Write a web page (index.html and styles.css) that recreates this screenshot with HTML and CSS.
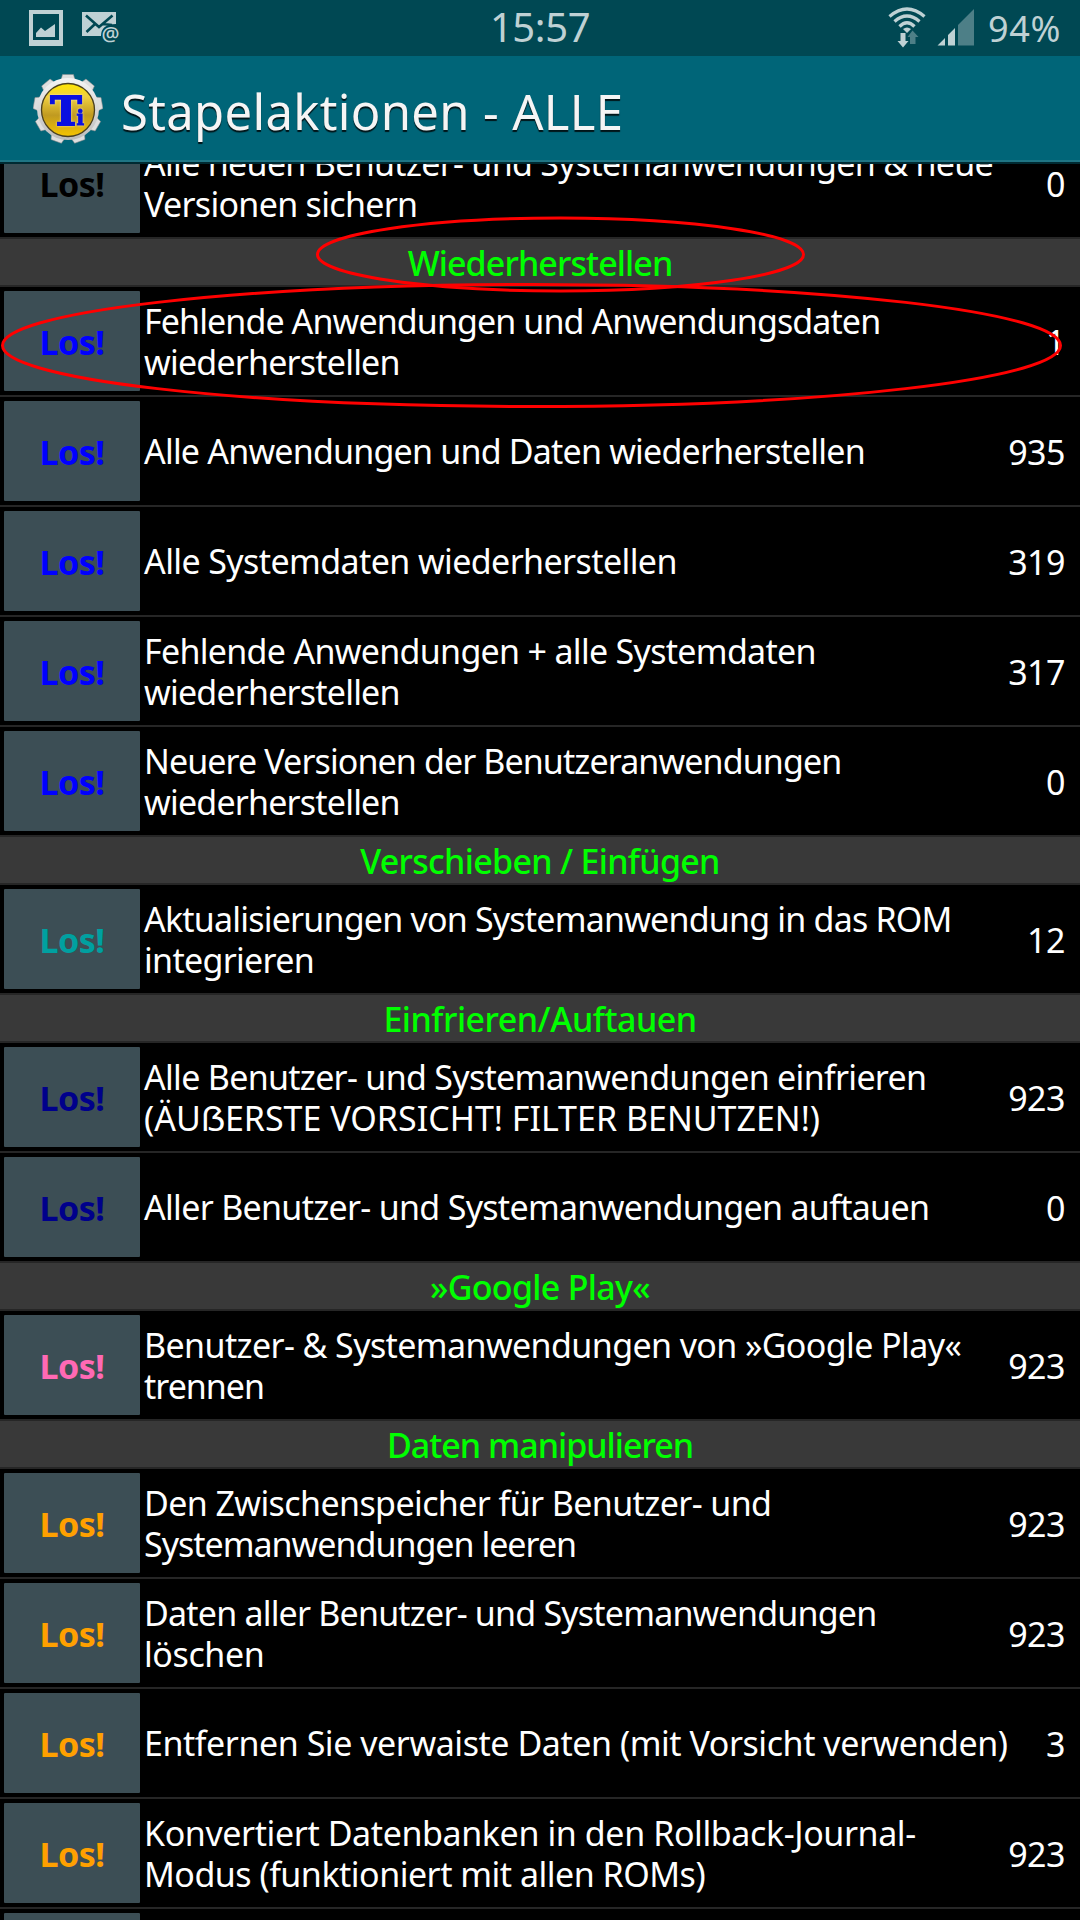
FILE: index.html
```html
<!DOCTYPE html>
<html lang="de">
  <head>
    <meta charset="UTF-8">
    <meta name="viewport" content="width=device-width, initial-scale=1.0">
    <title>Stapelaktionen - ALLE</title>
    <link rel="stylesheet" href="styles.css">
  </head>
  <body>
    <div class="screen">
      <div class="status-bar">
        <div class="status-left">
          <svg class="icon-picture" width="34" height="36" viewBox="0 0 34 36">
            <path fill="#bfd1d4" fill-rule="evenodd" d="M0 0H34V36H0ZM4 4V30H30V4Z"/>
            <path fill="#bfd1d4" d="M7 27V23L12 17.500L16 21L26 14V27Z"/>
          </svg>
          <svg class="icon-mail" width="40" height="36" viewBox="0 0 40 36">
            <path fill="#bfd1d4" d="M0 2H34V14Q19 14 19 26H0Z"/>
            <path fill="none" stroke="#004853" stroke-width="2.600" d="M4 5.500L17 17L30.500 5.500M4.500 22L13 14M30 15L21 14"/>
            <text class="mail-at" x="19.500" y="31">@</text>
          </svg>
        </div>
        <div class="clock">15:57</div>
        <div class="status-right">
          <svg class="icon-wifi" width="38" height="42" viewBox="0 0 38 42">
            <g fill="none" stroke="#bfd1d4" stroke-width="3.300">
              <path d="M1.500 10.500Q19 -4.500 36.500 10.500"/>
              <path d="M6.500 15.500Q19 4.500 31.500 15.500"/>
              <path d="M11.500 20.500Q19 13 26.500 20.500"/>
            </g>
            <path fill="#bfd1d4" d="M15 23Q19 20 23 23L19 27ZM12.500 27H17.500V35H20.500L15 41.500L9.500 35H12.500Z"/>
            <path fill="#4d7f87" d="M24.500 24.500L30.500 31H27.500V38H22V31H19.500Z"/>
          </svg>
          <svg class="icon-signal" width="38" height="38" viewBox="0 0 38 38">
            <path fill="#bfd1d4" d="M0.500 37.500L8 30V37.500ZM11 27L18 20V37.500H11Z"/>
            <path fill="#4d7f87" d="M21 17L37 1V37.500H21Z"/>
          </svg>
          <div class="battery">94%</div>
        </div>
      </div>

      <div class="action-bar">
        <svg class="logo" width="70" height="70" viewBox="-35 -35 70 70">
          <defs>
            <linearGradient id="steel" x1="0" y1="0" x2="0" y2="1">
              <stop offset="0" stop-color="#f4f4f4"/>
              <stop offset="1" stop-color="#bcbcbc"/>
            </linearGradient>
            <linearGradient id="gold" x1="0" y1="0" x2="0" y2="1">
              <stop offset="0" stop-color="#ffe600"/>
              <stop offset="0.250" stop-color="#f0d040"/>
              <stop offset="0.600" stop-color="#c09a20"/>
              <stop offset="1" stop-color="#f5c400"/>
            </linearGradient>
            <path id="tooth" d="M-7.500 -27L-5.500 -34.500H5.500L7.500 -27Z"/>
          </defs>
          <g fill="#dedede" stroke="#8a8a8a" stroke-width="0.500">
            <use href="#tooth"/>
            <use href="#tooth" transform="rotate(40)"/>
            <use href="#tooth" transform="rotate(80)"/>
            <use href="#tooth" transform="rotate(120)"/>
            <use href="#tooth" transform="rotate(160)"/>
            <use href="#tooth" transform="rotate(200)"/>
            <use href="#tooth" transform="rotate(240)"/>
            <use href="#tooth" transform="rotate(280)"/>
            <use href="#tooth" transform="rotate(320)"/>
          </g>
          <circle r="31" fill="url(#steel)"/>
          <circle cy="1" r="26.500" fill="url(#gold)" stroke="#4a4020" stroke-width="1.300"/>
          <text class="logo-t" x="-17.500" y="15.500" textLength="31" lengthAdjust="spacingAndGlyphs">T</text>
          <text class="logo-i" x="8.500" y="15.500">i</text>
        </svg>
        <h1 class="title">Stapelaktionen - ALLE</h1>
      </div>

      <div class="list">
        <div class="row first">
          <button class="go black">Los!</button>
          <div class="text"><span class="ls-7">Alle neuen Benutzer- und Systemanwendungen &amp; neue</span><span class="ls-7">Versionen sichern</span></div>
          <div class="count">0</div>
        </div>

        <div class="section"><span class="ls-9">Wiederherstellen</span></div>
        <div class="row">
          <button class="go blue">Los!</button>
          <div class="text"><span class="ls-9">Fehlende Anwendungen und Anwendungsdaten</span><span class="ls-8">wiederherstellen</span></div>
          <div class="count">1</div>
        </div>
        <div class="row">
          <button class="go blue">Los!</button>
          <div class="text"><span class="ls-8">Alle Anwendungen und Daten wiederherstellen</span></div>
          <div class="count">935</div>
        </div>
        <div class="row">
          <button class="go blue">Los!</button>
          <div class="text"><span class="ls-6">Alle Systemdaten wiederherstellen</span></div>
          <div class="count">319</div>
        </div>
        <div class="row">
          <button class="go blue">Los!</button>
          <div class="text"><span class="ls-7">Fehlende Anwendungen + alle Systemdaten</span><span class="ls-8">wiederherstellen</span></div>
          <div class="count">317</div>
        </div>
        <div class="row">
          <button class="go blue">Los!</button>
          <div class="text"><span class="ls-9">Neuere Versionen der Benutzeranwendungen</span><span class="ls-8">wiederherstellen</span></div>
          <div class="count">0</div>
        </div>

        <div class="section"><span class="ls-7">Verschieben / Einfügen</span></div>
        <div class="row">
          <button class="go teal">Los!</button>
          <div class="text"><span class="ls-8">Aktualisierungen von Systemanwendung in das ROM</span><span class="ls-7">integrieren</span></div>
          <div class="count">12</div>
        </div>

        <div class="section"><span class="ls-5">Einfrieren/Auftauen</span></div>
        <div class="row">
          <button class="go navy">Los!</button>
          <div class="text"><span class="ls-7">Alle Benutzer- und Systemanwendungen einfrieren</span><span>(ÄUẞERSTE VORSICHT! FILTER BENUTZEN!)</span></div>
          <div class="count">923</div>
        </div>
        <div class="row">
          <button class="go navy">Los!</button>
          <div class="text"><span class="ls-7">Aller Benutzer- und Systemanwendungen auftauen</span></div>
          <div class="count">0</div>
        </div>

        <div class="section"><span class="ls-7">»Google Play«</span></div>
        <div class="row">
          <button class="go pink">Los!</button>
          <div class="text"><span class="ls-6">Benutzer- &amp; Systemanwendungen von »Google Play«</span><span class="ls-10">trennen</span></div>
          <div class="count">923</div>
        </div>

        <div class="section"><span class="ls-10">Daten manipulieren</span></div>
        <div class="row">
          <button class="go orange">Los!</button>
          <div class="text"><span class="ls-6">Den Zwischenspeicher für Benutzer- und</span><span class="ls-10">Systemanwendungen leeren</span></div>
          <div class="count">923</div>
        </div>
        <div class="row">
          <button class="go orange">Los!</button>
          <div class="text"><span class="ls-8">Daten aller Benutzer- und Systemanwendungen</span><span class="ls-4">löschen</span></div>
          <div class="count">923</div>
        </div>
        <div class="row">
          <button class="go orange">Los!</button>
          <div class="text"><span class="ls-45">Entfernen Sie verwaiste Daten (mit Vorsicht verwenden)</span></div>
          <div class="count">3</div>
        </div>
        <div class="row">
          <button class="go orange">Los!</button>
          <div class="text"><span class="ls-4">Konvertiert Datenbanken in den Rollback-Journal-</span><span class="ls-5">Modus (funktioniert mit allen ROMs)</span></div>
          <div class="count">923</div>
        </div>
        <div class="row">
          <button class="go orange"></button>
        </div>
      </div>

      <!-- red markings over the list -->
      <svg class="marks" width="1080" height="1920" viewBox="0 0 1080 1920">
        <ellipse cx="560.500" cy="254.500" rx="243" ry="36.500"/>
        <ellipse cx="531.500" cy="345.500" rx="529" ry="61"/>
      </svg>
    </div>
  </body>
</html>
```
FILE: styles.css
```css
*{
    margin: 0;
    padding: 0;
    box-sizing: border-box;
}
body{
    background-color: black;
    font-family: "Noto Sans", sans-serif;
}
.screen{
    position: relative;
    width: 1080px;
    height: 1920px;
    overflow: hidden;
    display: flex;
    flex-direction: column;
    color: white;
}

/* status bar */
.status-bar{
    height: 56px;
    flex: none;
    display: grid;
    grid-template-columns: 1fr auto 1fr;
    background-color: #004853;
    color: #bfd1d4;
}
.status-left{
    display: flex;
    align-items: flex-start;
    gap: 19px;
    padding: 10px 0 0 29px;
}
.mail-at{
    font-size: 20px;
    font-weight: 500;
    fill: #bfd1d4;
}
.clock{
    font-size: 40px;
    line-height: 54px;
    letter-spacing: -0.4px;
}
.status-right{
    display: flex;
    justify-content: flex-end;
    align-items: flex-start;
    padding-right: 19px;
}
.icon-wifi{
    margin-top: 6px;
}
.icon-signal{
    margin: 8px 13px 0 11px;
}
.battery{
    font-size: 36px;
    line-height: 58px;
    letter-spacing: 0.6px;
}

/* title */
.action-bar{
    height: 108px;
    flex: none;
    display: flex;
    align-items: center;
    gap: 18px;
    padding-left: 33px;
    background-color: #006578;
    border-bottom: 2px solid #002a32;
    box-shadow: inset 0 -2px 0 #1f7584;
}
.title{
    font-size: 49px;
    font-weight: 400;
    line-height: 60px;
    letter-spacing: 0.33px;
    padding-top: 3px;
    color: #f5f5f5;
    text-shadow: 0 2px 1px rgba(0, 0, 0, 0.8);
}
.logo-t, .logo-i{
    font-family: "DejaVu Serif", serif;
    font-weight: 700;
    fill: #0a10e0;
    stroke: #0a10e0;
    stroke-width: 2px;
    filter: drop-shadow(0 0 1px #f8e8b0);
}
.logo-t{
    font-size: 39px;
}
.logo-i{
    font-size: 20px;
    stroke-width: 1px;
}

/* list */
.list{
    flex: 1;
    overflow: hidden;
}
.row{
    height: 110px;
    display: flex;
    align-items: center;
    padding: 0 15px 0 4px;
    border-bottom: 2px solid #262626;
    font-size: 34px;
}
.first{
    margin-top: -35px;
}
.go{
    width: 136px;
    height: 100px;
    flex: none;
    padding-top: 1px;
    border: none;
    border-radius: 1px;
    background-color: #3c4e55;
    font-family: inherit;
    font-size: 34px;
    font-weight: 700;
    letter-spacing: -0.5px;
}
.text{
    flex: 1;
    margin-left: 4px;
    padding-top: 1px;
    line-height: 41px;
    white-space: nowrap;
}
.text span{
    display: block;
}
.count{
    padding-top: 2px;
    letter-spacing: -0.5px;
}
.section{
    height: 48px;
    border-bottom: 2px solid #262626;
    background-color: #393939;
    color: #00ff00;
    font-size: 34px;
    font-weight: 500;
    line-height: 48px;
    text-align: center;
}

.ls-4{ letter-spacing: -0.4px; }
.ls-45{ letter-spacing: -0.45px; }
.ls-5{ letter-spacing: -0.5px; }
.ls-6{ letter-spacing: -0.6px; }
.ls-7{ letter-spacing: -0.7px; }
.ls-8{ letter-spacing: -0.8px; }
.ls-9{ letter-spacing: -0.9px; }
.ls-10{ letter-spacing: -1px; }

.black{ color: #000000; }
.blue{ color: #0000ff; }
.teal{ color: #00a0a0; }
.navy{ color: #00008b; }
.pink{ color: #ff69b4; }
.orange{ color: #ffa000; }

.marks{
    position: absolute;
    top: 0;
    left: 0;
    pointer-events: none;
    fill: none;
    stroke: #ff0000;
    stroke-width: 3px;
}
```
